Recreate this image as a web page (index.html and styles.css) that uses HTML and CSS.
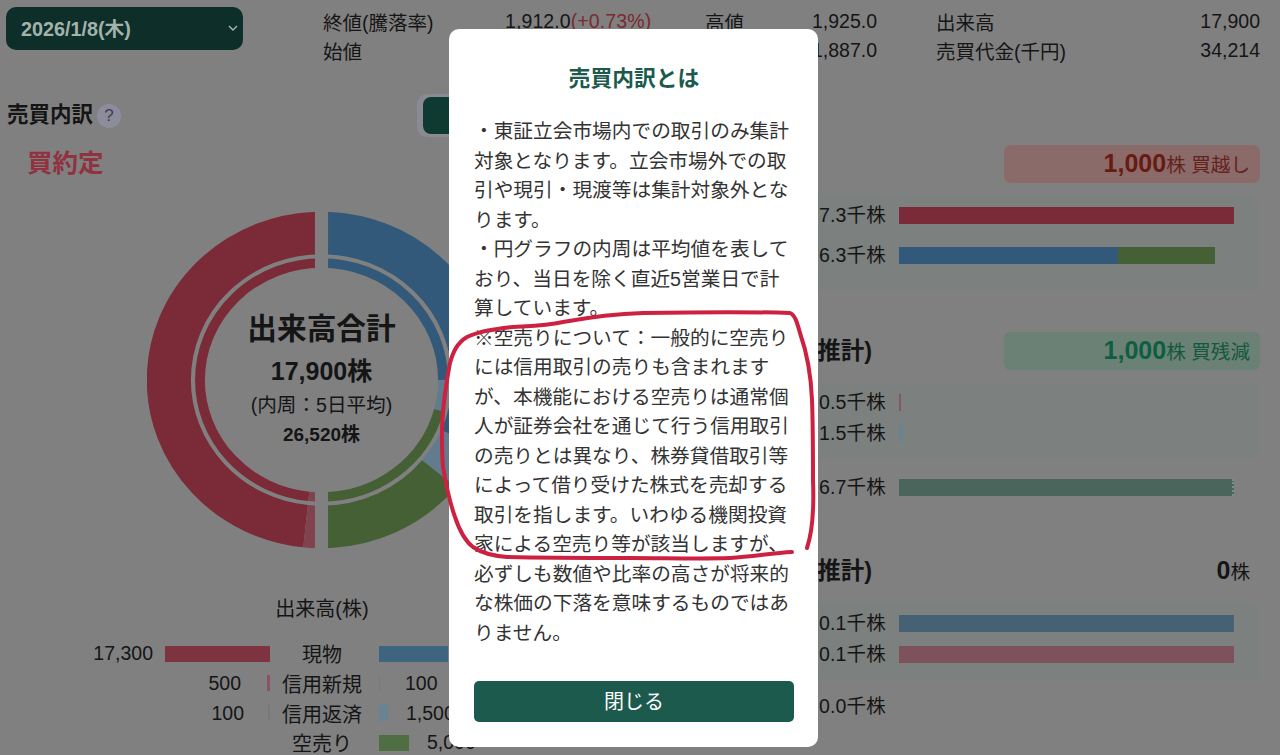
FILE: index.html
```html
<!DOCTYPE html>
<html lang="ja">
<head>
<meta charset="utf-8">
<title>売買内訳</title>
<link rel="stylesheet" href="styles.css">
</head>
<body>
<div class="page">
  <header class="topbar">
    <div class="date-select">
      <span>2026/1/8(木)</span>
      <svg class="chevron" viewBox="0 0 10 6" width="10" height="6"><path d="M1 1l4 4 4-4"/></svg>
    </div>
    <div class="stats">
      <span>終値(騰落率)</span><span class="val-a">1,912.0<em class="up">(+0.73%)</em></span>
      <span class="lab-b">高値</span><span class="num">1,925.0</span>
      <span class="lab-c">出来高</span><span class="num">17,900</span>
      <span>始値</span><span class="val-a">1,887.0</span>
      <span class="lab-b">安値</span><span class="num">1,887.0</span>
      <span class="lab-c">売買代金(千円)</span><span class="num">34,214</span>
    </div>
  </header>

  <main class="main">
    <section class="left">
      <div class="left-head">
        <h2 class="title">売買内訳</h2>
        <span class="help">?</span>
        <div class="toggle"><span class="toggle-on">株数</span></div>
      </div>
      <h3 class="buy-title">買約定</h3>

      <div class="donut">
        <svg class="donut-svg" viewBox="0 0 336 336" preserveAspectRatio="none">
          <g transform="rotate(-90 168 168)">
            <circle class="outer s-blue" cx="168" cy="168" r="147" pathLength="360" stroke-dasharray="113.6 360"/>
            <circle class="outer s-lblue" cx="168" cy="168" r="147" pathLength="360" stroke-dasharray="16 360" stroke-dashoffset="-113.6"/>
            <circle class="outer s-green" cx="168" cy="168" r="147" pathLength="360" stroke-dasharray="50.4 360" stroke-dashoffset="-129.6"/>
            <circle class="outer s-red" cx="168" cy="168" r="147" pathLength="360" stroke-dasharray="174 360" stroke-dashoffset="-186"/>
            <circle class="outer s-lred" cx="168" cy="168" r="147" pathLength="360" stroke-dasharray="6 360" stroke-dashoffset="-180"/>
            <circle class="inner s-blue" cx="168" cy="168" r="117" pathLength="360" stroke-dasharray="90 360"/>
            <circle class="inner s-lblue" cx="168" cy="168" r="117" pathLength="360" stroke-dasharray="15 360" stroke-dashoffset="-90"/>
            <circle class="inner s-green" cx="168" cy="168" r="117" pathLength="360" stroke-dasharray="75 360" stroke-dashoffset="-105"/>
            <circle class="inner s-red" cx="168" cy="168" r="117" pathLength="360" stroke-dasharray="174 360" stroke-dashoffset="-186"/>
            <circle class="inner s-lred" cx="168" cy="168" r="117" pathLength="360" stroke-dasharray="6 360" stroke-dashoffset="-180"/>
          </g>
          <rect class="donut-gap" x="161.7" y="0" width="12.6" height="336"/>
        </svg>
        <div class="donut-center">
          <div class="dc-title">出来高合計</div>
          <div class="dc-total">17,900株</div>
          <div class="dc-note">(内周：5日平均)</div>
          <div class="dc-avg">26,520株</div>
        </div>
      </div>

      <div class="vol-title">出来高(株)</div>
      <div class="vol-table">
        <div class="vol-row">
          <div class="side-l g12"><span>17,300</span><i class="bar b-red" style="width:105px"></i></div>
          <div class="vol-label">現物</div>
          <div class="side-r g12"><i class="bar b-blue" style="width:69px"></i><span>11,400</span></div>
        </div>
        <div class="vol-row">
          <div class="side-l g26"><span>500</span><i class="bar b-lred" style="width:3px"></i></div>
          <div class="vol-label">信用新規</div>
          <div class="side-r g25"><i class="bar b-faint" style="width:1px"></i><span>100</span></div>
        </div>
        <div class="vol-row">
          <div class="side-l g24"><span>100</span><i class="bar b-faint" style="width:2px"></i></div>
          <div class="vol-label">信用返済</div>
          <div class="side-r g18"><i class="bar b-lblue" style="width:9px"></i><span>1,500</span></div>
        </div>
        <div class="vol-row">
          <div class="side-l"></div>
          <div class="vol-label">空売り</div>
          <div class="side-r g18"><i class="bar b-green" style="width:30px"></i><span>5,000</span></div>
        </div>
      </div>
    </section>

    <section class="right">
      <div class="sec-head">
        <h3 class="sec-title">現物売買</h3>
        <div class="badge badge-red"><strong>1,000</strong>株 買越し</div>
      </div>
      <div class="panel panel-1">
        <div class="row"><span class="row-label">17.3千株</span><i class="hbar b-red2" style="width:335px"></i></div>
        <div class="row"><span class="row-label">16.3千株</span><i class="hbar b-blue2" style="width:219px"></i><i class="hbar b-green2" style="width:97px"></i></div>
      </div>

      <div class="sec-head sec-2">
        <h3 class="sec-title">信用残増減(推計)</h3>
        <div class="badge badge-green"><strong>1,000</strong>株 買残減</div>
      </div>
      <div class="panel panel-2">
        <div class="row"><span class="row-label">0.5千株</span><i class="hbar b-lred" style="width:2px"></i></div>
        <div class="row"><span class="row-label">1.5千株</span><i class="hbar b-lblue" style="width:4px"></i></div>
      </div>
      <div class="row row-free"><span class="row-label">16.7千株</span><i class="hbar b-teal" style="width:335px"></i></div>

      <div class="sec-head sec-3">
        <h3 class="sec-title">貸借残増減(推計)</h3>
        <div class="badge badge-plain"><strong>0</strong>株</div>
      </div>
      <div class="panel panel-3">
        <div class="row"><span class="row-label">0.1千株</span><i class="hbar b-blue3" style="width:335px"></i></div>
        <div class="row"><span class="row-label">0.1千株</span><i class="hbar b-pink" style="width:335px"></i></div>
      </div>
      <div class="row row-last"><span class="row-label">0.0千株</span></div>
    </section>
  </main>
</div>

<div class="modal-layer">
  <div class="modal">
    <h2 class="modal-title">売買内訳とは</h2>
    <p class="modal-text">・東証立会市場内での取引のみ集計対象となります。立会市場外での取引や現引・現渡等は集計対象外となります。<br>・円グラフの内周は平均値を表しており、当日を除く直近5営業日で計算しています。<br>※空売りについて：一般的に空売りには信用取引の売りも含まれますが、本機能における空売りは通常個人が証券会社を通じて行う信用取引の売りとは異なり、株券貸借取引等によって借り受けた株式を売却する取引を指します。いわゆる機関投資家による空売り等が該当しますが、必ずしも数値や比率の高さが将来的な株価の下落を意味するものではありません。</p>
    <button class="modal-close" type="button">閉じる</button>
  </div>
</div>

<svg class="annotation" viewBox="0 0 1280 755" width="1280" height="755">
  <path d="M807 548C813 530 814 505 813 480C813 450 813 425 812 400C811 375 806 350 800 333C797 322 795 315 790 313C760 312 700 312 643 313C610 314 585 318 563 322C545 326 530 326 513 327C495 329 480 331 467 337C457 343 453 352 450 363C445 390 442 412 442 433C442 445 442 456 443 467C446 485 450 503 455 517C460 532 465 541 473 547C483 554 495 556 507 557C545 558 590 558 630 558C665 558 700 559 730 558C752 557 772 553 792 552"/>
</svg>
</body>
</html>
```
FILE: styles.css
```css
* { box-sizing: border-box; }
html, body { margin: 0; height: 755px; overflow: hidden; }
body {
  background: #808080;
  color: #151515;
  font-family: "Liberation Sans", "Noto Sans CJK JP", sans-serif;
  font-size: 19.5px;
}
h2, h3, p { margin: 0; }
em { font-style: normal; }
i { display: block; }

.page { width: 1280px; height: 755px; overflow: hidden; }

/* top bar */
.topbar { display: flex; height: 60px; padding: 7px 0 0 6px; }
.date-select {
  width: 237px;
  height: 43px;
  display: flex;
  align-items: center;
  justify-content: space-between;
  padding: 0 5px 2px 15px;
  border-radius: 10px;
  background: #0d2e29;
  color: #a3b3ab;
  font-size: 19.8px;
  font-weight: 700;
}
.chevron { fill: none; stroke: #a8b8b0; stroke-width: 1.4; }
.stats {
  display: grid;
  grid-template-columns: 182px 146px 161px 65px 210px 173px;
  grid-auto-rows: 29px;
  align-items: center;
  margin: 0 0 0 80px;
}
.val-a { white-space: nowrap; letter-spacing: 0.1px; }
.up { color: #7a2a30; }
.lab-b { padding-left: 54px; }
.lab-c { padding-left: 59px; }
.num { text-align: right; }

/* main */
.main { display: flex; }
.left { width: 644px; padding-top: 34px; }
.left-head { display: flex; align-items: center; height: 43px; padding-left: 7px; }
.title { font-size: 21.5px; font-weight: 700; line-height: 1; }
.help {
  width: 24px;
  height: 24px;
  margin-left: 4px;
  border-radius: 50%;
  background: #8c8c9c;
  color: #3a3f4c;
  font-size: 17px;
  line-height: 24px;
  text-align: center;
}
.toggle {
  width: 150px;
  height: 43px;
  margin-left: 296px;
  padding: 3px 6px;
  border-radius: 10px;
  background: #8a8a92;
}
.toggle-on {
  display: block;
  height: 37px;
  border-radius: 8px;
  background: #0e3a32;
  color: #a3b3ab;
  text-align: center;
  line-height: 37px;
}
.buy-title {
  margin: 11px 0 0 27px;
  color: #913240;
  font-size: 25.5px;
  font-weight: 700;
  line-height: 30px;
}

/* donut */
.donut { position: relative; width: 349px; height: 336px; margin: 34px 0 0 147px; }
.donut-svg { display: block; width: 349px; height: 336px; }
.donut-svg circle { fill: none; }
.outer { stroke-width: 42.5; }
.inner { stroke-width: 9.5; }
.s-red { stroke: #7b2b37; }
.s-lred { stroke: #80424f; }
.s-blue { stroke: #33597a; }
.s-lblue { stroke: #627c8e; }
.s-green { stroke: #466036; }
.donut-gap { fill: #808080; }
.donut-center {
  position: absolute;
  top: 97px;
  left: 0;
  width: 349px;
  display: flex;
  flex-direction: column;
  align-items: center;
}
.dc-title { height: 40px; font-size: 29.7px; font-weight: 700; line-height: 40px; }
.dc-total { height: 40px; margin-top: 2px; font-size: 25px; font-weight: 700; line-height: 40px; }
.dc-note { height: 30px; margin-top: -1px; font-size: 19.6px; line-height: 30px; }
.dc-avg { height: 30px; font-size: 19px; font-weight: 700; line-height: 30px; }

/* volume table */
.vol-title { margin-top: 49px; text-align: center; font-size: 20px; line-height: 24px; }
.vol-table { margin-top: 18px; }
.vol-row {
  display: grid;
  grid-template-columns: 1fr 100px 1fr;
  height: 29.67px;
  align-items: center;
}
.vol-label { text-align: center; white-space: nowrap; font-size: 20px; }
.side-l { display: flex; justify-content: flex-end; align-items: center; padding-right: 2px; }
.side-r { display: flex; align-items: center; padding-left: 7px; }
.g12 { gap: 12px; }
.g18 { gap: 18px; }
.g24 { gap: 24px; }
.g25 { gap: 25px; }
.g26 { gap: 26px; }
.bar { height: 16px; flex: none; }
.b-red { background: #7e3440; }
.b-blue { background: #3f6480; }
.b-lred { background: #8a5561; }
.b-faint { background: #777a7c; }
.b-lblue { background: #688394; }
.b-green { background: #4f6e44; }

/* right column */
.right { width: 568px; margin-left: 48px; padding-top: 85px; }
.sec-head { display: flex; justify-content: space-between; align-items: center; height: 38px; }
.sec-title { margin-bottom: 5px; font-size: 23.5px; font-weight: 700; white-space: nowrap; }
.sec-2 { margin-top: 41px; }
.sec-3 { margin-top: 56px; }
.badge {
  width: 256px;
  height: 38px;
  padding-right: 10px;
  border-radius: 6px;
  text-align: right;
  font-size: 19.6px;
  line-height: 36px;
  white-space: nowrap;
}
.badge strong { font-size: 25px; }
.badge-red { background: #8b6a6a; color: #63231d; }
.badge-red strong { color: #671b12; }
.badge-green { background: #6c8176; color: #14583f; }
.badge-green strong { color: #0d5f42; }
.panel { width: 567px; margin-top: 11px; background: #7c807e; }
.panel-1 { height: 97px; padding-top: 13px; display: flex; flex-direction: column; gap: 23px; }
.panel-2 { height: 76px; margin-top: 13px; padding-top: 11px; display: flex; flex-direction: column; gap: 14px; }
.panel-3 { height: 76px; margin-top: 13px; padding-top: 12px; display: flex; flex-direction: column; gap: 14px; }
.row { display: flex; align-items: center; height: 17px; }
.row-label { width: 194px; margin: 0 13px 4px 0; text-align: right; white-space: nowrap; flex: none; letter-spacing: 0.2px; }
.row-free { margin-top: 20px; }
.row-last { margin-top: 19px; }
.hbar { height: 17px; flex: none; }
.b-red2 { background: #7b2b37; }
.b-blue2 { background: #33597a; }
.b-green2 { background: #466036; }
.b-teal { background: #4a665c; border-right: 2px dotted #7a8f88; }
.b-blue3 { background: #466174; }
.b-pink { background: #7d525c; }

/* modal */
.modal-layer {
  position: absolute;
  inset: 0;
  display: flex;
  justify-content: center;
  align-items: flex-start;
  padding: 29px 13px 0 0;
}
.modal {
  width: 369px;
  height: 718px;
  padding: 35px 24px 25px 25px;
  border-radius: 10px;
  background: #fff;
  color: #333;
}
.modal-title {
  color: #1b5a4c;
  font-size: 21.8px;
  font-weight: 700;
  line-height: 30px;
  text-align: center;
}
.modal-text { margin-top: 23px; font-size: 19.7px; line-height: 29.5px; }
.modal-close {
  display: block;
  width: 320px;
  height: 41px;
  margin-top: 33px;
  padding: 0 0 3px;
  border: 0;
  border-radius: 5px;
  background: #1b5a4c;
  color: #fff;
  font: inherit;
  font-size: 20px;
}
.annotation { position: absolute; top: 0; left: 0; pointer-events: none; }
.annotation path { fill: none; stroke: #cc2140; stroke-width: 4; stroke-linecap: round; stroke-linejoin: round; }
```
